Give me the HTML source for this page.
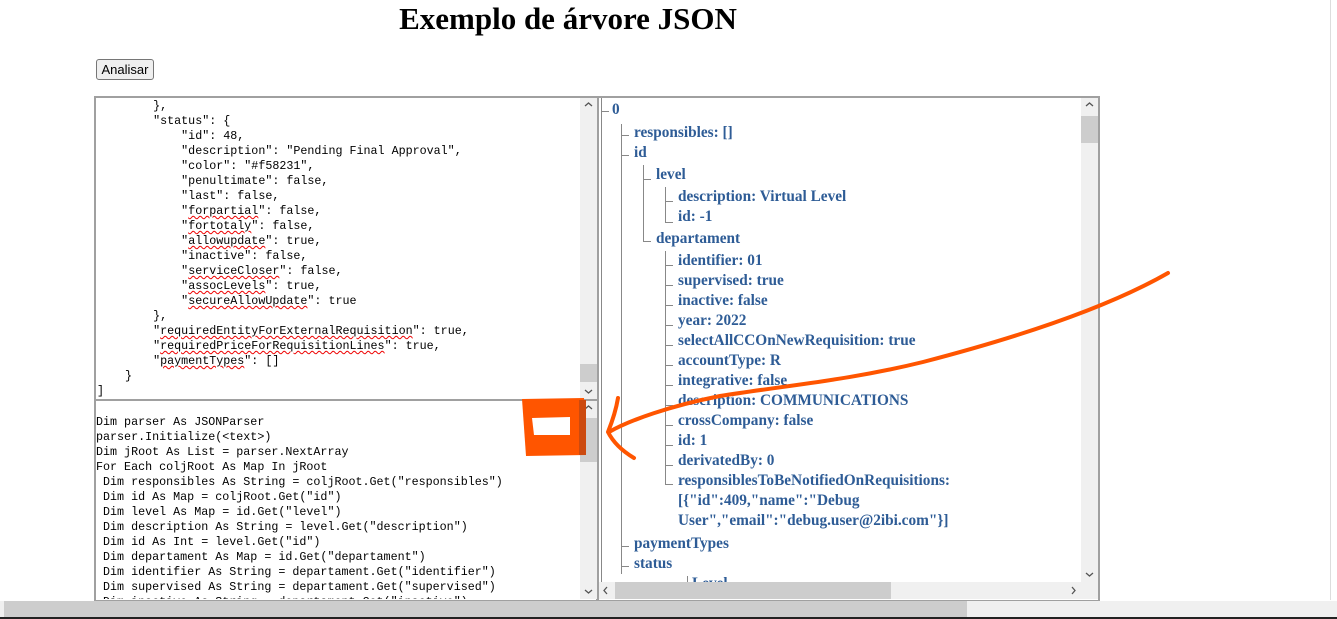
<!DOCTYPE html>
<html><head><meta charset="utf-8"><style>
*{margin:0;padding:0;box-sizing:border-box}
body{width:1337px;height:619px;overflow:hidden;background:#fff;position:relative;font-family:"Liberation Serif",serif}
.abs{position:absolute}
h1{position:absolute;left:0;width:1136px;top:1px;text-align:center;font:bold 31px "Liberation Serif",serif;color:#000}
.btn{left:96px;top:59px;width:58px;height:21px;border:1px solid #767676;border-radius:3px;background:#efefef;font:13px "Liberation Sans",sans-serif;text-align:center;line-height:19px;color:#000}
.mono{font:11.7px/15px "Liberation Mono",monospace;color:#000;white-space:pre}
.sb{background:#f0f0f0}
.thumb{background:#cdcdcd}
.tree{font:bold 15.3px/20px "Liberation Serif",serif;color:#2e5c96;white-space:nowrap}
.sp{text-decoration:underline wavy #e00;text-decoration-thickness:1px;text-underline-offset:1px}
.vl{position:absolute;width:1px;background:#888}
.hl{position:absolute;height:1px;background:#888;width:8px}
</style></head><body>
<h1>Exemplo de árvore JSON</h1>
<div class="abs btn">Analisar</div>

<div class="abs" style="left:94px;top:96px;width:504px;height:506px;border:2px solid #a0a0a0"></div>
<div class="abs" style="left:96px;top:98px;width:484px;height:301px;overflow:hidden">
<div class="mono abs" style="left:1px;top:1px">        },
        "status": {
            "id": 48,
            "description": "Pending Final Approval",
            "color": "#f58231",
            "penultimate": false,
            "last": false,
            "<span class="sp">forpartial</span>": false,
            "<span class="sp">fortotaly</span>": false,
            "<span class="sp">allowupdate</span>": true,
            "inactive": false,
            "<span class="sp">serviceCloser</span>": false,
            "<span class="sp">assocLevels</span>": true,
            "<span class="sp">secureAllowUpdate</span>": true
        },
        "<span class="sp">requiredEntityForExternalRequisition</span>": true,
        "<span class="sp">requiredPriceForRequisitionLines</span>": true,
        "<span class="sp">paymentTypes</span>": []
    }
]</div></div>
<div class="abs sb" style="left:580px;top:98px;width:17px;height:301px"></div>
<div class="abs thumb" style="left:580px;top:364px;width:17px;height:18px"></div>
<div class="abs" style="left:96px;top:399px;width:501px;height:2px;background:#a0a0a0"></div>
<div class="abs" style="left:96px;top:401px;width:484px;height:198px;overflow:hidden">
<div class="mono abs" style="left:0;top:14px">Dim parser As JSONParser
parser.Initialize(&lt;text&gt;)
Dim jRoot As List = parser.NextArray
For Each coljRoot As Map In jRoot
 Dim responsibles As String = coljRoot.Get("responsibles")
 Dim id As Map = coljRoot.Get("id")
 Dim level As Map = id.Get("level")
 Dim description As String = level.Get("description")
 Dim id As Int = level.Get("id")
 Dim departament As Map = id.Get("departament")
 Dim identifier As String = departament.Get("identifier")
 Dim supervised As String = departament.Get("supervised")
 Dim inactive As String = departament.Get("inactive")</div></div>
<div class="abs sb" style="left:580px;top:401px;width:17px;height:198px"></div>
<div class="abs thumb" style="left:580px;top:418px;width:17px;height:44px"></div>

<div class="abs" style="left:597px;top:96px;width:503px;height:506px;border:2px solid #a0a0a0"></div>
<div class="abs" style="left:599px;top:98px;width:482px;height:484px;overflow:hidden">
<div class="vl" style="left:2px;top:0;height:484px"></div>
<div class="hl" style="left:2px;top:13px"></div>
<div class="vl" style="left:22px;top:26px;height:450px"></div>
<div class="hl" style="left:22px;top:37px"></div>
<div class="hl" style="left:22px;top:57px"></div>
<div class="hl" style="left:22px;top:448px"></div>
<div class="hl" style="left:22px;top:468px"></div>
<div class="vl" style="left:44px;top:67px;height:77px"></div>
<div class="hl" style="left:44px;top:81px"></div>
<div class="hl" style="left:44px;top:143px"></div>
<div class="vl" style="left:66px;top:89px;height:36px"></div>
<div class="hl" style="left:66px;top:103px"></div>
<div class="hl" style="left:66px;top:124px"></div>
<div class="vl" style="left:66px;top:153px;height:233px"></div>
<div class="hl" style="left:66px;top:167px"></div><div class="hl" style="left:66px;top:187px"></div>
<div class="hl" style="left:66px;top:207px"></div><div class="hl" style="left:66px;top:227px"></div>
<div class="hl" style="left:66px;top:247px"></div><div class="hl" style="left:66px;top:267px"></div>
<div class="hl" style="left:66px;top:287px"></div><div class="hl" style="left:66px;top:307px"></div>
<div class="hl" style="left:66px;top:327px"></div><div class="hl" style="left:66px;top:347px"></div>
<div class="hl" style="left:66px;top:367px"></div><div class="hl" style="left:66px;top:386px"></div>
<div class="vl" style="left:88px;top:478px;height:10px"></div>
<div class="tree abs" style="left:13px;top:2px">0</div>
<div class="tree abs" style="left:35px;top:25px">responsibles: []</div>
<div class="tree abs" style="left:35px;top:45px">id</div>
<div class="tree abs" style="left:57px;top:67px">level</div>
<div class="tree abs" style="left:79px;top:89px">description: Virtual Level</div>
<div class="tree abs" style="left:79px;top:109px">id: -1</div>
<div class="tree abs" style="left:57px;top:131px">departament</div>
<div class="tree abs" style="left:79px;top:153px;line-height:20px">identifier: 01<br>supervised: true<br>inactive: false<br>year: 2022<br>selectAllCCOnNewRequisition: true<br>accountType: R<br>integrative: false<br>description: COMMUNICATIONS<br>crossCompany: false<br>id: 1<br>derivatedBy: 0<br>responsiblesToBeNotifiedOnRequisitions:<br>[{"id":409,"name":"Debug<br>User","email":"debug.user@2ibi.com"}]</div>
<div class="tree abs" style="left:35px;top:436px">paymentTypes</div>
<div class="tree abs" style="left:35px;top:456px">status</div>
<div class="tree abs" style="left:93px;top:476px">Level</div>
</div>
<div class="abs sb" style="left:1081px;top:98px;width:17px;height:484px"></div>
<div class="abs thumb" style="left:1081px;top:116px;width:17px;height:27px"></div>
<div class="abs sb" style="left:599px;top:582px;width:482px;height:17px"></div>
<div class="abs thumb" style="left:615px;top:582px;width:276px;height:17px"></div>
<div class="abs sb" style="left:1081px;top:582px;width:17px;height:17px"></div>

<div class="abs sb" style="left:0;top:601px;width:1337px;height:16px"></div>
<div class="abs thumb" style="left:4px;top:601px;width:963px;height:16px"></div>
<div class="abs" style="left:0;top:617px;width:1337px;height:2px;background:#222"></div>
<div class="abs" style="left:1330px;top:0;width:1px;height:600px;background:#ddd"></div>

<svg class="abs" style="left:0;top:0" width="1337" height="619">
<g stroke="#555" stroke-width="1.3" fill="none">
<polyline points="585,106 588.5,103 592,106"/><polyline points="585,390 588.5,393 592,390"/>
<polyline points="585,409 588.5,406 592,409"/><polyline points="585,590 588.5,593 592,590"/>
<polyline points="1086,106 1089.5,103 1093,106"/><polyline points="1086,573 1089.5,576 1093,573"/>
<polyline points="607,587 604,590.5 607,594"/><polyline points="1072,587 1075,590.5 1072,594"/>
</g>
<path d="M1168 273 C1100 312 1000 342 923 362 C850 380 790 385 720 396 C670 406 630 420 609 432" stroke="#ff5500" stroke-width="4" fill="none" stroke-linecap="round"/>
<path d="M618 398 C616 410 612 422 608 432 C614 444 624 452 634 458" stroke="#ff5500" stroke-width="4" fill="none" stroke-linecap="round" stroke-linejoin="round"/>
<path d="M522 399 L584 398 L586 455 L526 456 Z" fill="#ff5500"/>
<path d="M579 400 L586 400 L586 455 L579 455 Z" fill="#cc4a0f"/>
<path d="M532 418 L570 417 L570 435 L534 435 Z" fill="#fff"/>
</svg>
</body></html>
